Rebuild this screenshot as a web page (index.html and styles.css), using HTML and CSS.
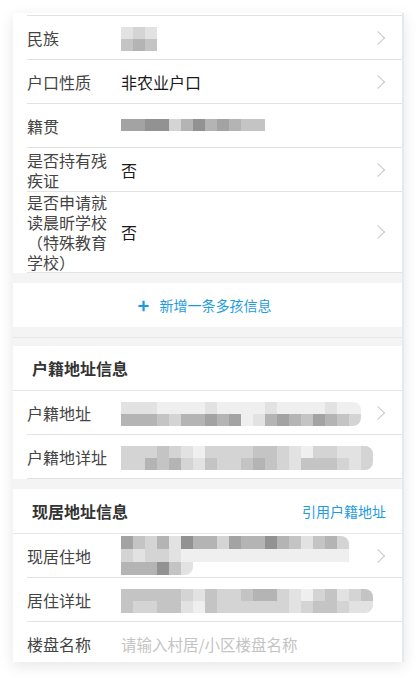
FILE: index.html
```html
<!DOCTYPE html>
<html>
<head>
	<meta charset="utf-8">
	<title>学生信息</title>
	<link rel="stylesheet" href="styles.css">
</head>
<body>
<div class="card">
    <div class="stub"></div>

    <div class="row">
        <span class="label">民族</span>
        <div class="value">
            <div class="mosaic">
                <div class="line"><i class="b"></i><i class="c"></i><i class="b"></i></div>
                <div class="line"><i class="d"></i><i class="e"></i><i class="d"></i></div>
            </div>
        </div>
        <span class="arrow"></span>
    </div>

    <div class="row">
        <span class="label">户口性质</span>
        <div class="value">非农业户口</div>
        <span class="arrow"></span>
    </div>

    <div class="row">
        <span class="label">籍贯</span>
        <div class="value">
            <div class="mosaic up">
                <div class="line"><i class="f"></i><i class="f"></i><i class="g"></i><i class="g"></i><i class="c"></i><i class="e"></i><i class="g"></i><i class="e"></i><i class="f"></i><i class="e"></i><i class="d"></i><i class="d"></i></div>
            </div>
        </div>
    </div>

    <div class="row">
        <span class="label">是否持有残疾证</span>
        <div class="value">否</div>
        <span class="arrow"></span>
    </div>

    <div class="row">
        <span class="label">是否申请就读晨昕学校（特殊教育学校）</span>
        <div class="value">否</div>
        <span class="arrow"></span>
    </div>

    <div class="gap"></div>

    <div class="add">
        <span class="plus">+</span>
        <span>新增一条多孩信息</span>
    </div>

    <div class="gap"></div>
    <div class="gap thin"></div>

    <div class="head">
        <span>户籍地址信息</span>
    </div>

    <div class="row">
        <span class="label">户籍地址</span>
        <div class="value">
            <div class="mosaic round">
                <div class="line"><i class="b"></i><i class="b"></i><i class="b"></i><i class="a"></i><i class="a"></i><i class="a"></i><i class="a"></i><i class="b"></i><i class="a"></i><i class="a"></i><i class="a"></i><i class="a"></i><i class="b"></i><i class="a"></i><i class="a"></i><i class="a"></i><i class="a"></i><i class="b"></i><i class="a"></i><i class="a"></i></div>
                <div class="line"><i class="e"></i><i class="e"></i><i class="e"></i><i class="d"></i><i class="c"></i><i class="e"></i><i class="e"></i><i class="f"></i><i class="e"></i><i class="f"></i><i class="a"></i><i class="b"></i><i class="e"></i><i class="f"></i><i class="e"></i><i class="d"></i><i class="f"></i><i class="e"></i><i class="d"></i><i class="c"></i></div>
            </div>
        </div>
        <span class="arrow"></span>
    </div>

    <div class="row">
        <span class="label">户籍地详址</span>
        <div class="value">
            <div class="mosaic round">
                <div class="line"><i class="c"></i><i class="c"></i><i class="c"></i><i class="d"></i><i class="c"></i><i class="b"></i><i class="a"></i><i class="c"></i><i class="c"></i><i class="c"></i><i class="c"></i><i class="d"></i><i class="d"></i><i class="c"></i><i class="b"></i><i class="a"></i><i class="c"></i><i class="c"></i><i class="b"></i><i class="b"></i><i class="c"></i></div>
                <div class="line"><i class="c"></i><i class="c"></i><i class="e"></i><i class="d"></i><i class="e"></i><i class="c"></i><i class="b"></i><i class="d"></i><i class="c"></i><i class="c"></i><i class="d"></i><i class="e"></i><i class="d"></i><i class="c"></i><i class="b"></i><i class="d"></i><i class="d"></i><i class="d"></i><i class="c"></i><i class="b"></i><i class="c"></i></div>
            </div>
        </div>
    </div>

    <div class="gap"></div>

    <div class="head">
        <span>现居地址信息</span>
        <span class="link">引用户籍地址</span>
    </div>

    <div class="row">
        <span class="label">现居住地</span>
        <div class="value">
            <div class="mosaic round tall">
                <div class="line"><i class="f"></i><i class="d"></i><i class="c"></i><i class="e"></i><i class="b"></i><i class="g"></i><i class="e"></i><i class="e"></i><i class="c"></i><i class="f"></i><i class="e"></i><i class="e"></i><i class="g"></i><i class="e"></i><i class="d"></i><i class="b"></i><i class="d"></i><i class="e"></i><i class="c"></i></div>
                <div class="line"><i class="c"></i><i class="b"></i><i class="c"></i><i class="c"></i><i class="b"></i><i class="a"></i><i class="a"></i><i class="a"></i><i class="a"></i><i class="a"></i><i class="a"></i><i class="a"></i><i class="a"></i><i class="a"></i><i class="a"></i><i class="a"></i><i class="a"></i><i class="a"></i><i class="a"></i></div>
                <div class="line"><i class="e"></i><i class="e"></i><i class="e"></i><i class="g"></i><i class="d"></i><i class="b"></i></div>
            </div>
        </div>
        <span class="arrow"></span>
    </div>

    <div class="row">
        <span class="label">居住详址</span>
        <div class="value">
            <div class="mosaic round">
                <div class="line"><i class="d"></i><i class="d"></i><i class="d"></i><i class="d"></i><i class="d"></i><i class="c"></i><i class="b"></i><i class="d"></i><i class="c"></i><i class="c"></i><i class="d"></i><i class="e"></i><i class="e"></i><i class="c"></i><i class="b"></i><i class="a"></i><i class="c"></i><i class="d"></i><i class="b"></i><i class="c"></i><i class="d"></i></div>
                <div class="line"><i class="d"></i><i class="c"></i><i class="c"></i><i class="d"></i><i class="d"></i><i class="b"></i><i class="a"></i><i class="d"></i><i class="c"></i><i class="c"></i><i class="c"></i><i class="c"></i><i class="c"></i><i class="c"></i><i class="b"></i><i class="c"></i><i class="d"></i><i class="d"></i><i class="c"></i><i class="b"></i><i class="b"></i></div>
            </div>
        </div>
    </div>

    <div class="row last">
        <span class="label">楼盘名称</span>
        <div class="value hint">请输入村居/小区楼盘名称</div>
    </div>
</div>
</body>
</html>
```

FILE: styles.css
```css
* {
	margin: 0;
	padding: 0;
	box-sizing: border-box;
}

html, body {
	height: 100%;
	overflow: hidden;
	background: #fff;
}

body {
	font-family: "Noto Sans CJK SC", "Noto Sans", sans-serif;
	color: #333;
}

.card {
	margin: 13px 0 0 13px;
	width: 391px;
	height: 649px;
	overflow: hidden;
	background: #fff;
	border-right: 2px solid #e3e8f1;
	box-shadow: 0 4px 14px rgba(0, 0, 0, 0.10);
}

.stub {
	height: 3px;
	margin-left: 14px;
	border-bottom: 1px solid #e2e2e2;
}

.row {
	display: flex;
	align-items: center;
	min-height: 44px;
	margin-left: 14px;
	padding-right: 18px;
	border-bottom: 1px solid #e2e2e2;
}

.row.last {
	border-bottom: none;
}

.label {
	width: 80px;
	margin-right: 14px;
	flex-shrink: 0;
	font-size: 16px;
	line-height: 20px;
	color: #444;
}

.value {
	flex: 1;
	font-size: 16px;
	color: #1a1a1a;
}

.value.hint {
	font-size: 15.5px;
	color: #c4c4c4;
}

.arrow {
	width: 10px;
	height: 10px;
	margin-right: 1px;
	border-top: 1.5px solid #c8c8c8;
	border-right: 1.5px solid #c8c8c8;
	transform: rotate(45deg);
}

/* redacted text blocks */
.mosaic {
	display: inline-block;
	vertical-align: middle;
}

.mosaic.up {
	margin-bottom: 6px;
}

.mosaic.round {
	border-radius: 0 8px 8px 0;
	overflow: hidden;
}

.line {
	display: flex;
}

.line i {
	width: 12px;
	height: 12px;
}

.tall .line i {
	height: 13px;
}

.tall .line:last-child {
	border-bottom-right-radius: 8px;
	overflow: hidden;
	width: max-content;
}

.a { background: #efefef; }
.b { background: #e2e2e2; }
.c { background: #d4d4d4; }
.d { background: #c4c4c4; }
.e { background: #b4b4b4; }
.f { background: #a3a3a3; }
.g { background: #929292; }

.gap {
	height: 10px;
	background: #f4f4f5;
}

.gap.thin {
	height: 9px;
	border-top: 1px solid #e6e6e8;
}

.add {
	display: flex;
	justify-content: center;
	align-items: center;
	height: 44px;
	font-size: 14px;
	color: #1e9be0;
	padding-right: 6px;
}

.plus {
	font-size: 20px;
	font-weight: bold;
	margin-right: 10px;
	line-height: 20px;
}

.head {
	display: flex;
	justify-content: space-between;
	align-items: center;
	height: 45px;
	padding: 0 16px 0 19px;
	border-bottom: 1px solid #e6e6e6;
	font-size: 16px;
	font-weight: bold;
	color: #333;
}

.link {
	font-size: 14px;
	font-weight: normal;
	color: #1e9be0;
}
```
